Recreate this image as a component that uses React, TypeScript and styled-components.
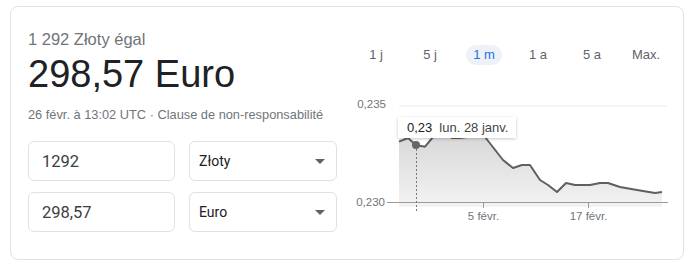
import styled, { createGlobalStyle } from "styled-components";

const GlobalStyle = createGlobalStyle`
  body {
    margin: 0;
    background: #fff;
    font-family: "Liberation Sans", Arial, sans-serif;
  }
`;

const ranges = ["1 j", "5 j", "1 m", "1 a", "5 a", "Max."];

// points of the rate line, in chart coordinates
const points: [number, number][] = [
  [50, 46.7], [59, 43], [67, 50], [76, 51.7], [84, 42], [89, 35], [96, 35],
  [103, 43], [111, 43], [118, 42], [136, 42], [154, 65], [164, 73], [173, 70],
  [181, 70], [191, 85], [199, 90], [208, 97], [217, 88], [226, 90], [241, 90],
  [251, 88], [259, 88], [271, 92], [288, 95], [294, 96], [306, 98], [313, 97],
];

function App() {
  const line = points.map((p) => p.join(",")).join(" ");
  const area = `50,112 ${line} 313,112`;

  return (
    <>
      <GlobalStyle />
      <Page>
        <Card>
          <LeftColumn>
            <Subtitle>1 292 Złoty égal</Subtitle>
            <Result>298,57 Euro</Result>
            <Meta>26 févr. à 13:02 UTC · Clause de non-responsabilité</Meta>
            <FieldRow>
              <AmountInput defaultValue="1292" />
              <CurrencySelect>
                Złoty
                <Caret />
              </CurrencySelect>
            </FieldRow>
            <FieldRow>
              <AmountInput defaultValue="298,57" />
              <CurrencySelect>
                Euro
                <Caret />
              </CurrencySelect>
            </FieldRow>
          </LeftColumn>

          <RightColumn>
            <Tabs>
              {ranges.map((r) => (
                <TabCell key={r}>
                  <Tab $active={r === "1 m"}>{r}</Tab>
                </TabCell>
              ))}
            </Tabs>
            <ChartBox>
              <svg width="325" height="130" viewBox="0 0 325 130">
                <defs>
                  <linearGradient id="fill" x1="0" y1="0" x2="0" y2="1">
                    <stop offset="0" stopColor="#d6d6d6" />
                    <stop offset="1" stopColor="#f3f3f3" />
                  </linearGradient>
                </defs>
                <line x1="50" y1="11" x2="318" y2="11" stroke="#ececec" strokeWidth="1" />
                <AxisLabel x="37" y="13" textAnchor="end">0,235</AxisLabel>
                <polygon points={area} fill="url(#fill)" />
                <polyline points={line} fill="none" stroke="#5f5f5f" strokeWidth="2" strokeLinejoin="round" />
                <line x1="38" y1="107.5" x2="319" y2="107.5" stroke="#9a9a9a" strokeWidth="1" />
                <AxisLabel x="36" y="111" textAnchor="end">0,230</AxisLabel>
                <line x1="134.5" y1="107" x2="134.5" y2="113" stroke="#9a9a9a" />
                <line x1="239.5" y1="107" x2="239.5" y2="113" stroke="#9a9a9a" />
                <AxisLabel x="134.5" y="125" textAnchor="middle">5 févr.</AxisLabel>
                <AxisLabel x="239.5" y="125" textAnchor="middle">17 févr.</AxisLabel>
                <line x1="67.5" y1="50" x2="67.5" y2="116" stroke="#777" strokeDasharray="2 2" />
                <circle cx="67" cy="50" r="4" fill="#666" />
              </svg>
              <Tooltip>
                <strong>0,23</strong>
                <span>lun. 28 janv.</span>
              </Tooltip>
            </ChartBox>
          </RightColumn>
        </Card>
      </Page>
    </>
  );
}

const Page = styled.div`
  padding: 6px 16px 0 10px;
`;

const Card = styled.div`
  width: 674px;
  box-sizing: border-box;
  border: 1px solid #dfe1e5;
  border-radius: 8px;
  display: flex;
  gap: 12px;
  padding: 22px 9px 27px 17px;
`;

const LeftColumn = styled.div`
  width: 309px;
  display: flex;
  flex-direction: column;
`;

const Subtitle = styled.div`
  font-size: 16.5px;
  line-height: 20px;
  color: #70757a;
`;

const Result = styled.div`
  margin-top: 3px;
  font-size: 38px;
  line-height: 44px;
  color: #202124;
`;

const Meta = styled.div`
  margin-top: 11px;
  font-size: 12.8px;
  line-height: 16px;
  color: #70757a;
`;

const FieldRow = styled.div`
  display: flex;
  gap: 14px;
  margin-top: 11px;
  &:first-of-type,
  ${Meta} + & {
    margin-top: 18px;
  }
`;

const fieldBase = `
  box-sizing: border-box;
  height: 40px;
  border: 1px solid #dfe1e5;
  border-radius: 6px;
  background: #fff;
  font-family: Roboto, "Liberation Sans", Arial, sans-serif;
`;

const AmountInput = styled.input.attrs({ type: "text" })`
  ${fieldBase}
  width: 147px;
  padding: 0 0 0 13px;
  font-size: 16.5px;
  color: #3c4043;
  outline: none;
`;

const CurrencySelect = styled.div`
  ${fieldBase}
  width: 148px;
  padding: 0 10px 0 9px;
  display: flex;
  align-items: center;
  justify-content: space-between;
  font-size: 14px;
  color: #202124;
`;

const Caret = styled.span`
  width: 0;
  height: 0;
  margin-right: 1px;
  border-left: 5px solid transparent;
  border-right: 5px solid transparent;
  border-top: 5px solid #5f6368;
`;

const RightColumn = styled.div`
  width: 325px;
  display: flex;
  flex-direction: column;
`;

const Tabs = styled.div`
  margin-top: 16px;
  display: grid;
  grid-template-columns: repeat(6, 54px);
`;

const TabCell = styled.div`
  display: flex;
  justify-content: center;
`;

const Tab = styled.div<{ $active?: boolean }>`
  height: 20px;
  line-height: 20px;
  padding: 0 ${(p) => (p.$active ? "7px" : "0")};
  border-radius: 10px;
  font-size: 13px;
  color: ${(p) => (p.$active ? "#1a73e8" : "#5f6368")};
  background: ${(p) => (p.$active ? "#eef1f6" : "transparent")};
`;

const ChartBox = styled.div`
  position: relative;
  margin-top: 30px;
  height: 130px;
  svg {
    display: block;
  }
`;

const AxisLabel = styled.text`
  font-family: "Liberation Sans", Arial, sans-serif;
  font-size: 11.5px;
  fill: #70757a;
`;

const Tooltip = styled.div`
  position: absolute;
  left: 49px;
  top: 22px;
  width: 118px;
  height: 21px;
  box-sizing: border-box;
  padding: 0 9px;
  display: flex;
  align-items: center;
  gap: 7px;
  background: #fff;
  box-shadow: 0 1px 3px rgba(0, 0, 0, 0.22);
  font-size: 13px;
  color: #444;
  white-space: nowrap;
  strong {
    font-weight: normal;
    color: #202124;
  }
`;

export default App;
